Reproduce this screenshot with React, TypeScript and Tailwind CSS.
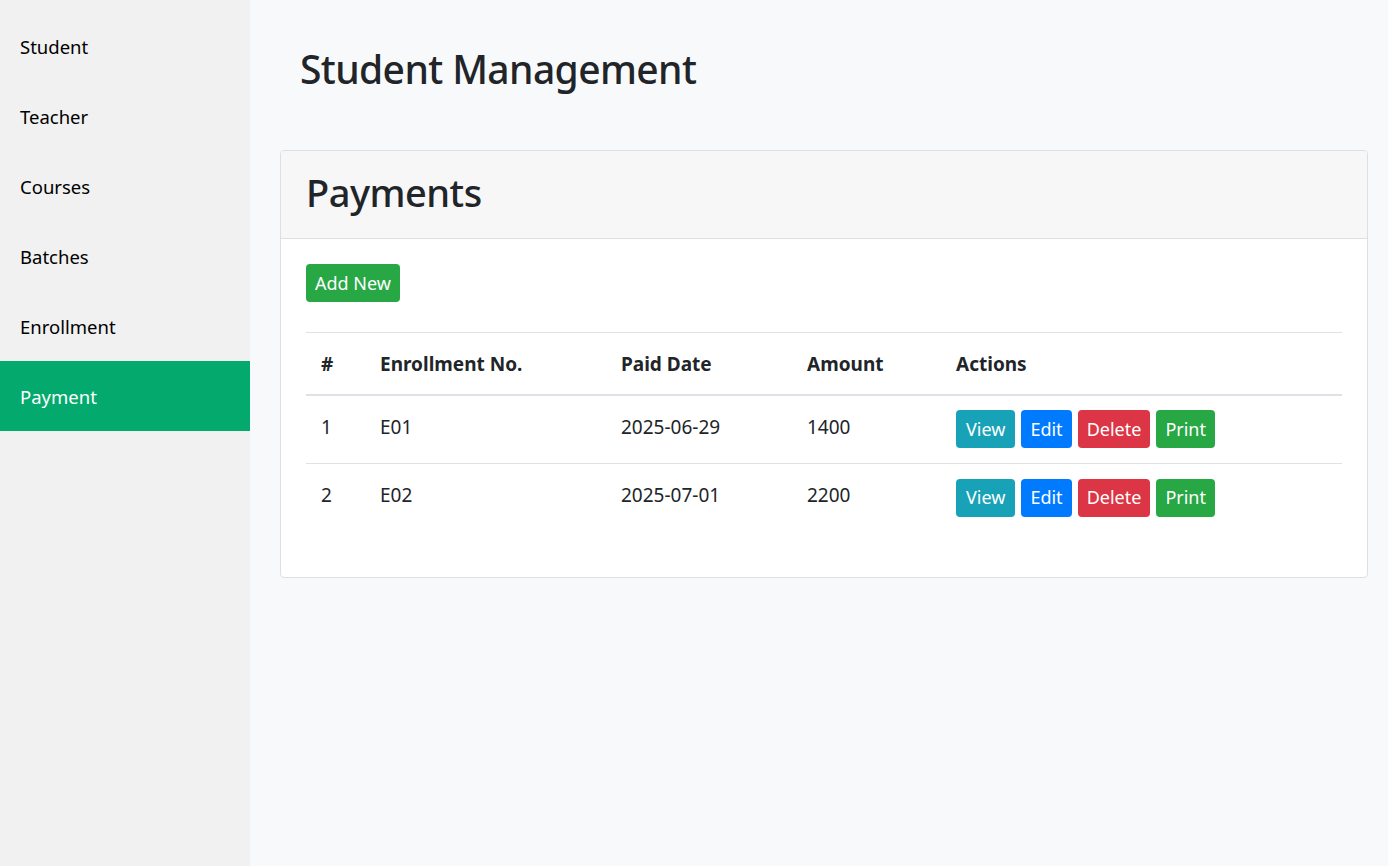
import React from "react";

const menu = ["Student", "Teacher", "Courses", "Batches", "Enrollment", "Payment"];

const payments = [
  { id: 1, enrollment: "E01", date: "2025-06-29", amount: 1400 },
  { id: 2, enrollment: "E02", date: "2025-07-01", amount: 2200 },
];

function ActionButtons() {
  return (
    <div className="flex gap-[6px] text-[18px]">
      <button className="h-[38px] px-[10px] rounded-[4px] bg-[#17a2b8] text-white">View</button>
      <button className="h-[38px] px-[9px] rounded-[4px] bg-[#007bff] text-white">Edit</button>
      <button className="h-[38px] px-[9px] rounded-[4px] bg-[#dc3545] text-white">Delete</button>
      <button className="h-[38px] px-[9px] rounded-[4px] bg-[#28a745] text-white">Print</button>
    </div>
  );
}

export default function App() {
  return (
    <div
      className="flex min-h-[866px] text-[19px] text-[#212529]"
      style={{ fontFamily: '"Segoe UI", "Noto Sans", "Open Sans", sans-serif' }}
    >
      <aside className="w-[250px] shrink-0 bg-[#f1f1f1] pt-[11px] text-[18.5px]">
        {menu.map((item) => (
          <div
            key={item}
            className={
              item === "Payment"
                ? "h-[70px] flex items-center pl-[20px] pt-[1px] bg-[#04aa6d] text-white"
                : "h-[70px] flex items-center pl-[20px] pt-[1px] text-black"
            }
          >
            {item}
          </div>
        ))}
      </aside>

      <main className="flex-1 bg-[#f8f9fa] pl-[30px] pr-[20px]">
        <h1 className="pl-[20px] pt-[45px] pb-[57px] text-[39px] leading-[48px] font-medium tracking-[-0.6px]">
          Student Management
        </h1>

        <div className="bg-white border border-[#dfdfdf] rounded-[4px]">
          <div className="h-[88px] flex items-center px-[25px] pb-[6px] bg-[#f7f7f7] border-b border-[#dfdfdf] rounded-t-[4px]">
            <h2 className="text-[38px] leading-[48px] font-medium tracking-[-0.5px]">Payments</h2>
          </div>

          <div className="px-[25px] pt-[25px] pb-[45px]">
            <button className="h-[38px] px-[9px] rounded-[4px] bg-[#28a745] text-white text-[18px]">Add New</button>

            <table className="w-full mt-[30px] border-collapse text-left">
              <colgroup>
                <col className="w-[59px]" />
                <col className="w-[241px]" />
                <col className="w-[186px]" />
                <col className="w-[149px]" />
                <col />
              </colgroup>
              <thead>
                <tr className="h-[62px] border-t border-[#dee2e6] border-b-2">
                  <th className="px-[15px] pt-[2px] font-bold">#</th>
                  <th className="px-[15px] pt-[2px] font-bold">Enrollment No.</th>
                  <th className="px-[15px] pt-[2px] font-bold">Paid Date</th>
                  <th className="px-[15px] pt-[2px] font-bold">Amount</th>
                  <th className="px-[15px] pt-[2px] font-bold">Actions</th>
                </tr>
              </thead>
              <tbody>
                {payments.map((p, i) => (
                  <tr key={p.id} className={i === 0 ? "h-[69px] border-b border-[#dee2e6]" : "h-[68px]"}>
                    <td className="px-[15px] pb-[5px]">{p.id}</td>
                    <td className="px-[15px] pb-[5px]">{p.enrollment}</td>
                    <td className="px-[15px] pb-[5px]">{p.date}</td>
                    <td className="px-[15px] pb-[5px]">{p.amount}</td>
                    <td className="px-[15px]">
                      <ActionButtons />
                    </td>
                  </tr>
                ))}
              </tbody>
            </table>
          </div>
        </div>
      </main>
    </div>
  );
}
